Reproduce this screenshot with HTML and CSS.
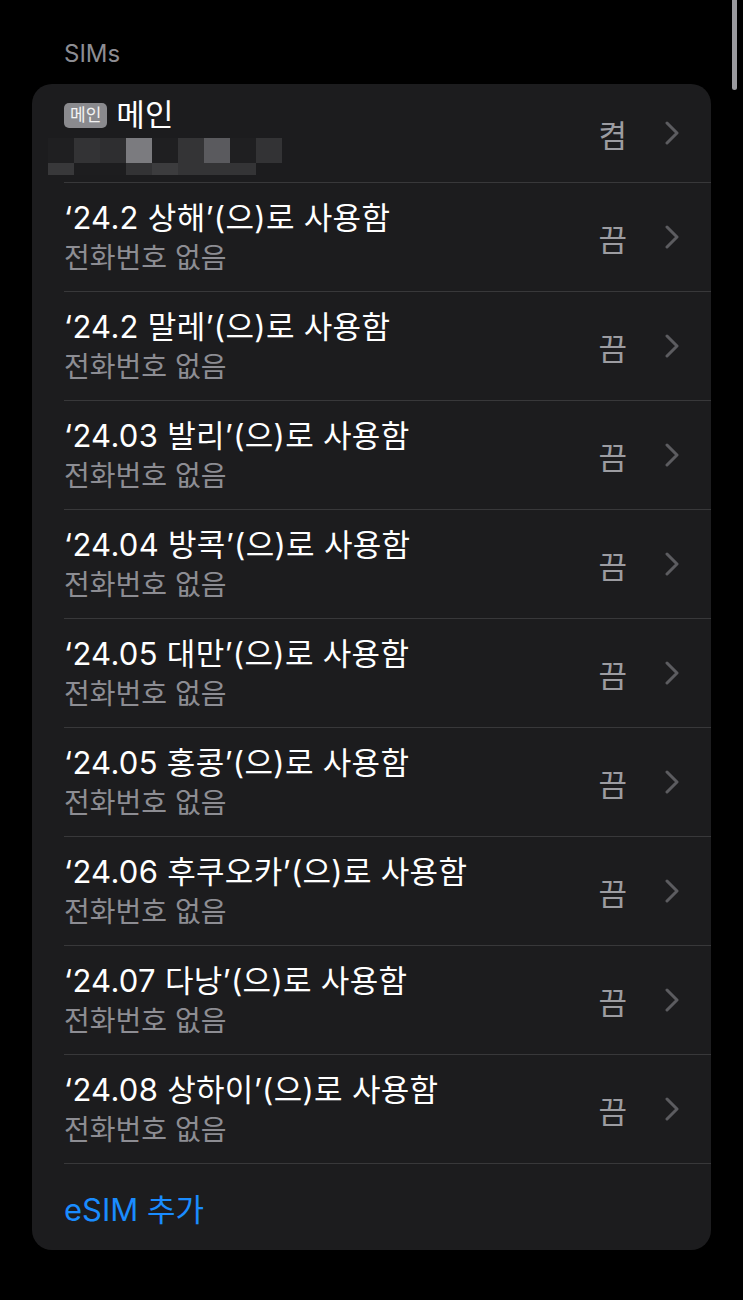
FILE: index.html
```html
<!DOCTYPE html>
<html lang="ko">
<head>
  <meta charset="UTF-8" />
  <meta name="viewport" content="width=device-width, initial-scale=1.0">
  <title>SIMs</title>
  <link rel="stylesheet" href="styles.css">
</head>

<body>
  <div class="scrollbar"></div>
  <div class="page">
    <h2 class="seccion">SIMs</h2>
    <div class="tarjeta">
      <div class="fila fila-main">
        <div class="fila-inner">
          <div class="textos">
            <div class="titulo"><span class="badge">메인</span>메인</div>
            <div class="mosaico">
              <i class="t1"></i><i class="t2"></i><i class="t3"></i><i class="t4"></i><i class="t1"></i><i class="t5"></i><i class="t6"></i><i class="t1"></i><i class="t2"></i>
              <i class="b1"></i><i class="b2"></i><i class="b2"></i><i class="t2"></i><i class="b3"></i><i class="t5"></i><i class="t5"></i><i class="t5"></i><i class="b4"></i>
            </div>
          </div>
          <span class="estado">켬</span>
          <svg class="chevron" width="14" height="24" viewBox="0 0 14 24"><polyline points="2,2 12,12 2,22" fill="none" stroke="#5c5c60" stroke-width="3" stroke-linecap="round" stroke-linejoin="round"/></svg>
        </div>
      </div>
      <div id="lista-sims"></div>
      <div class="fila fila-add">
        <div class="fila-inner">
          <span class="agregar">eSIM 추가</span>
        </div>
      </div>
    </div>
  </div>

  <script>
    const sims = [
      '24.2 상해', '24.2 말레', '24.03 발리', '24.04 방콕', '24.05 대만',
      '24.05 홍콩', '24.06 후쿠오카', '24.07 다낭', '24.08 상하이'
    ];
    const lista = document.getElementById('lista-sims');
    sims.forEach((nombre) => {
      const fila = document.createElement('div');
      fila.className = 'fila';
      fila.innerHTML = `
        <div class="fila-inner">
          <div class="textos">
            <div class="titulo">‘${nombre}’(으)로 사용함</div>
            <div class="subtitulo">전화번호 없음</div>
          </div>
          <span class="estado">끔</span>
          <svg class="chevron" width="14" height="24" viewBox="0 0 14 24"><polyline points="2,2 12,12 2,22" fill="none" stroke="#5c5c60" stroke-width="3" stroke-linecap="round" stroke-linejoin="round"/></svg>
        </div>
      `;
      lista.appendChild(fila);
    });
  </script>
</body>
</html>
```

FILE: styles.css
```css
body {
  background-color: #000;
  font-family: 'Inter', 'Noto Sans CJK KR', sans-serif;
  margin: 0;
  padding: 0;
  color: #fff;
}

.scrollbar {
  position: absolute;
  top: 0;
  left: 732px;
  width: 5px;
  height: 90px;
  background-color: #9a9a9e;
  border-radius: 0 0 3px 3px;
}

.page {
  padding-top: 39px;
}

.seccion {
  margin: 0 0 15px 64px;
  font-size: 24px;
  line-height: 30px;
  font-weight: 400;
  color: #8d8d93;
}

.tarjeta {
  margin: 0 32px;
  background-color: #1c1c1e;
  border-radius: 20px;
  overflow: hidden;
}

.fila {
  padding-left: 32px;
}

.fila-inner {
  display: flex;
  align-items: center;
  height: 108px;
  padding-right: 32px;
  border-bottom: 1px solid #38383a;
}

.fila-main .fila-inner {
  height: 98px;
}

.fila-add .fila-inner {
  height: 86px;
  border-bottom: none;
}

.textos {
  flex: 1;
  padding-top: 2px;
}

.titulo {
  font-size: 31px;
  line-height: 38px;
  letter-spacing: 0.3px;
  color: #fff;
  display: flex;
  align-items: center;
}

.subtitulo {
  font-size: 28px;
  line-height: 38px;
  margin-top: 2px;
  color: #8d8d93;
}

.fila-main .textos {
  align-self: flex-start;
  padding-top: 12px;
}

.badge {
  display: inline-block;
  background-color: #8a8a8e;
  color: #f2f2f2;
  font-size: 17px;
  line-height: 25px;
  letter-spacing: 0;
  padding: 0 6px;
  border-radius: 5px;
  margin-right: 9px;
}

.mosaico {
  display: grid;
  grid-template-columns: repeat(9, 26px);
  grid-template-rows: 25px 12px;
  margin: 4px 0 0 -16px;
}

.mosaico i {
  display: block;
}

.t1 { background-color: #1f1f21; }
.t2 { background-color: #333335; }
.t3 { background-color: #2e2e30; }
.t4 { background-color: #7b7b7f; }
.t5 { background-color: #343436; }
.t6 { background-color: #5a5a5e; }
.b1 { background-color: #38383a; }
.b2 { background-color: #1d1d1f; }
.b3 { background-color: #3c3c3e; }
.b4 { background-color: #1c1c1e; }

.estado {
  font-size: 31px;
  color: #9c9ca1;
  margin-right: 38px;
}

.chevron {
  display: block;
}

.agregar {
  font-size: 31px;
  color: #1a8cff;
}
```
